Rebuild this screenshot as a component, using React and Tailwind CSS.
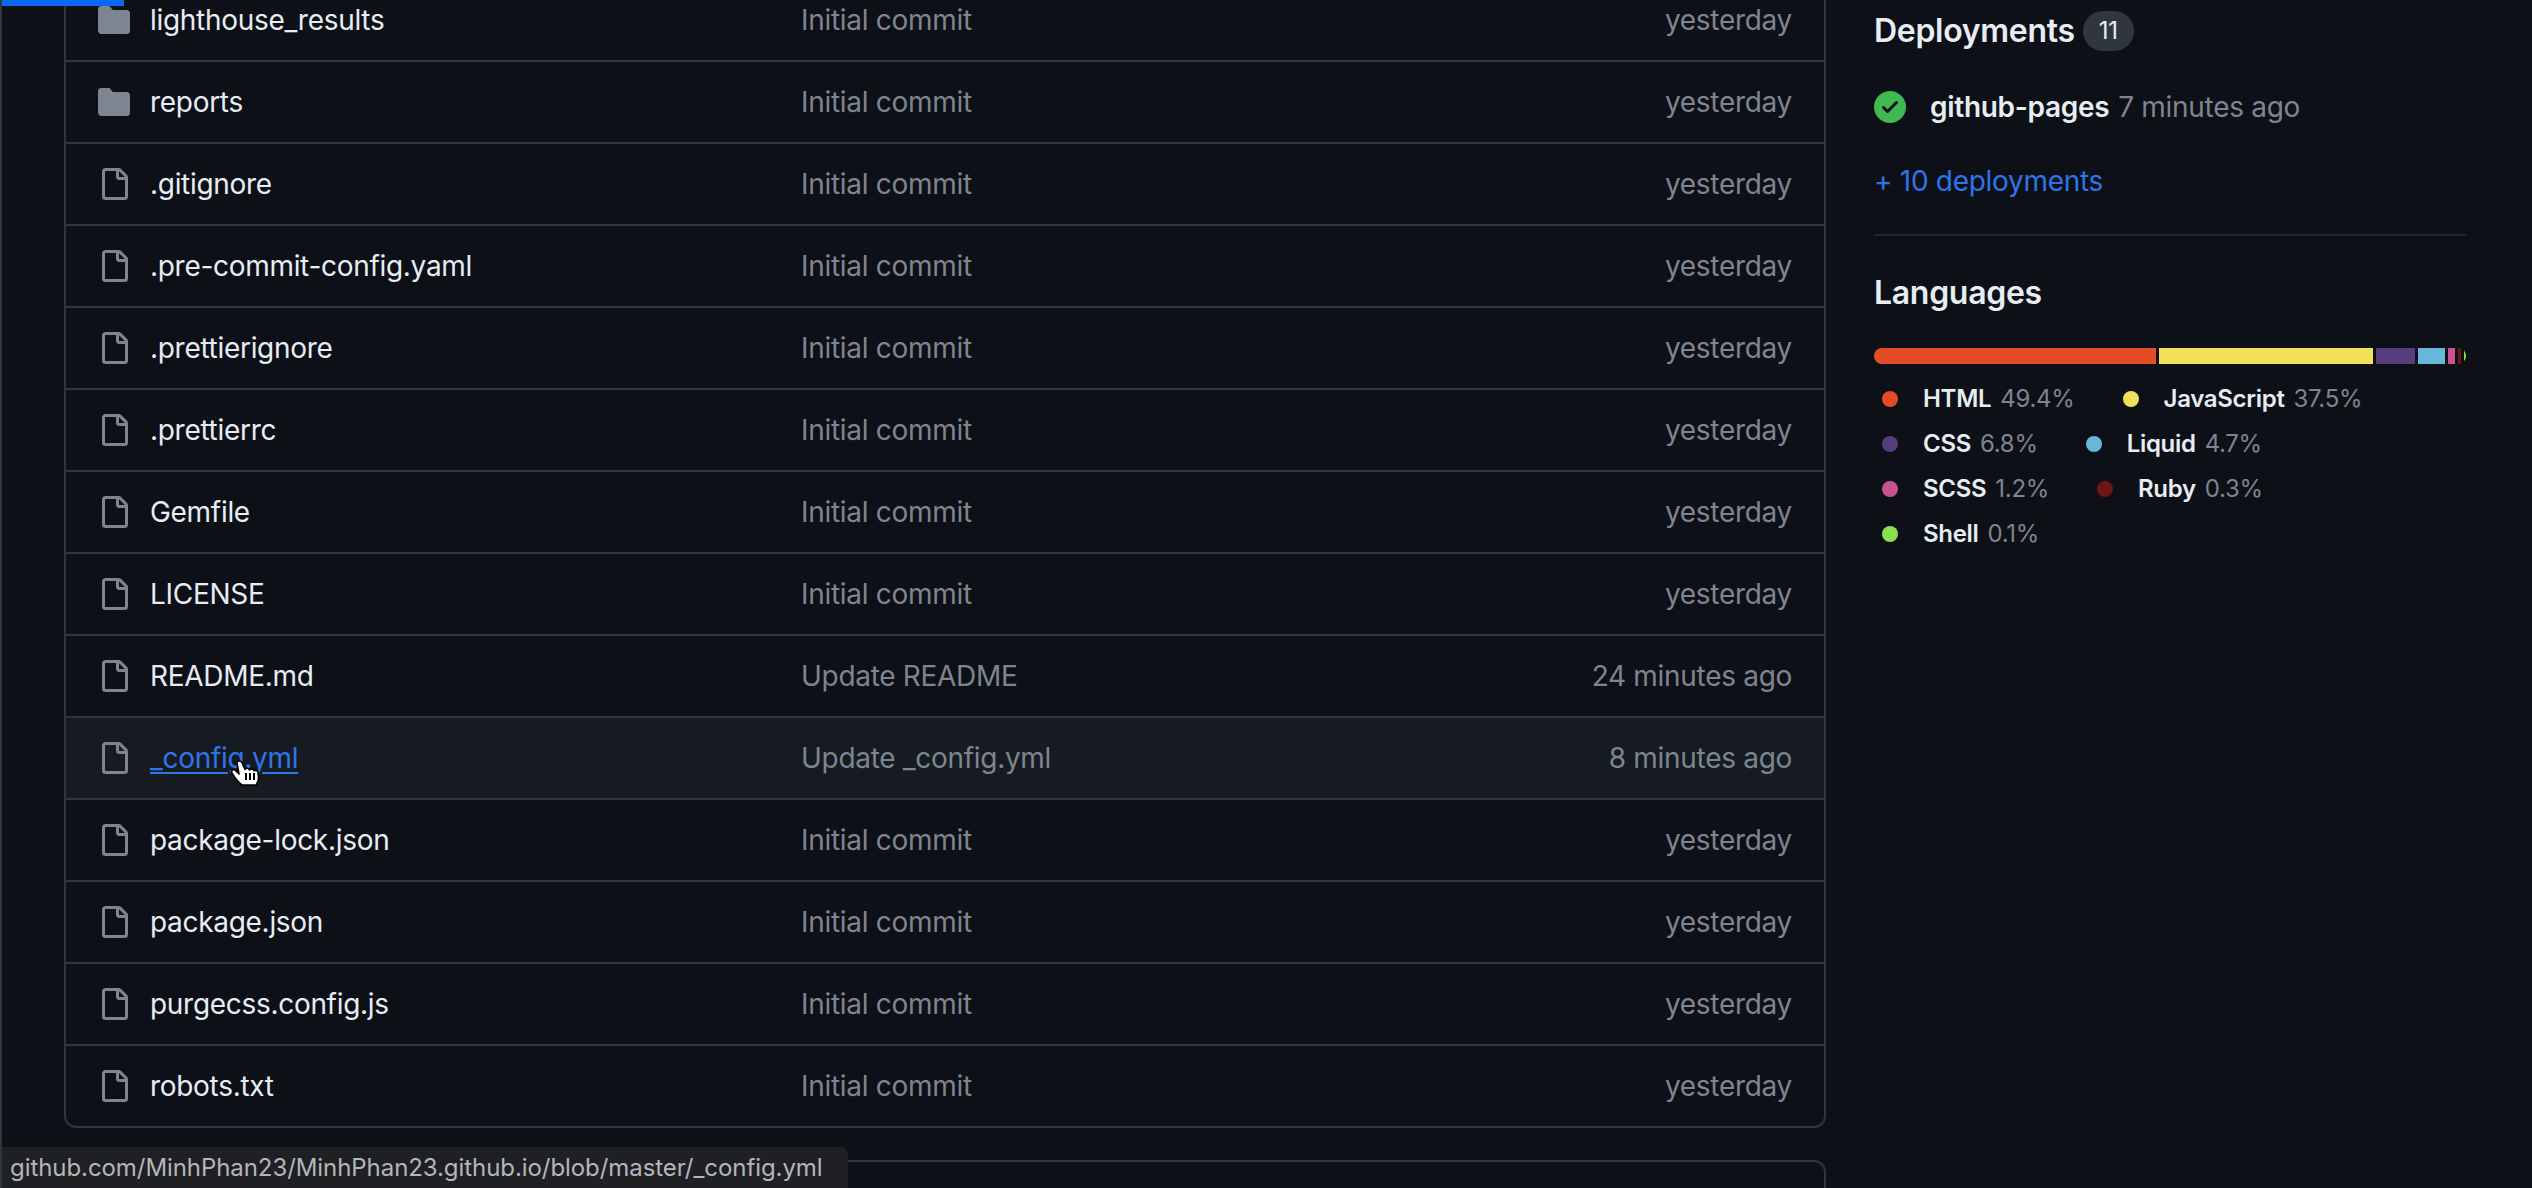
const FILES = [
  { name: 'lighthouse_results', dir: true, msg: 'Initial commit', time: 'yesterday' },
  { name: 'reports', dir: true, msg: 'Initial commit', time: 'yesterday' },
  { name: '.gitignore', msg: 'Initial commit', time: 'yesterday' },
  { name: '.pre-commit-config.yaml', msg: 'Initial commit', time: 'yesterday' },
  { name: '.prettierignore', msg: 'Initial commit', time: 'yesterday' },
  { name: '.prettierrc', msg: 'Initial commit', time: 'yesterday' },
  { name: 'Gemfile', msg: 'Initial commit', time: 'yesterday' },
  { name: 'LICENSE', msg: 'Initial commit', time: 'yesterday' },
  { name: 'README.md', msg: 'Update README', time: '24 minutes ago' },
  { name: '_config.yml', msg: 'Update _config.yml', time: '8 minutes ago', hover: true },
  { name: 'package-lock.json', msg: 'Initial commit', time: 'yesterday' },
  { name: 'package.json', msg: 'Initial commit', time: 'yesterday' },
  { name: 'purgecss.config.js', msg: 'Initial commit', time: 'yesterday' },
  { name: 'robots.txt', msg: 'Initial commit', time: 'yesterday' },
];

const LANG_ROWS = [
  [
    { name: 'HTML', pct: '49.4%', dot: 'bg-[#e34c26]' },
    { name: 'JavaScript', pct: '37.5%', dot: 'bg-[#f1e05a]' },
  ],
  [
    { name: 'CSS', pct: '6.8%', dot: 'bg-[#563d7c]' },
    { name: 'Liquid', pct: '4.7%', dot: 'bg-[#67b7dc]' },
  ],
  [
    { name: 'SCSS', pct: '1.2%', dot: 'bg-[#c6538c]' },
    { name: 'Ruby', pct: '0.3%', dot: 'bg-[#701516]' },
  ],
  [{ name: 'Shell', pct: '0.1%', dot: 'bg-[#89e051]' }],
];

function FileIcon() {
  return (
    <svg width="32" height="32" viewBox="0 0 16 16" fill="#7d8590" className="shrink-0">
      <path d="M2 1.75C2 .784 2.784 0 3.75 0h6.586c.464 0 .909.184 1.237.513l2.914 2.914c.329.328.513.773.513 1.237v9.586A1.75 1.75 0 0 1 13.25 16h-9.5A1.75 1.75 0 0 1 2 14.25Zm1.75-.25a.25.25 0 0 0-.25.25v12.5c0 .138.112.25.25.25h9.5a.25.25 0 0 0 .25-.25V6h-2.75A1.75 1.75 0 0 1 9 4.25V1.5Zm6.75.062V4.25c0 .138.112.25.25.25h2.688l-.011-.013-2.914-2.914-.013-.011Z" />
    </svg>
  );
}

function FolderIcon() {
  return (
    <svg width="32" height="32" viewBox="0 0 16 16" fill="#7d8590" className="shrink-0">
      <path d="M1.75 1A1.75 1.75 0 0 0 0 2.75v10.5C0 14.216.784 15 1.75 15h12.5A1.75 1.75 0 0 0 16 13.25v-8.5A1.75 1.75 0 0 0 14.25 3H7.5a.25.25 0 0 1-.2-.1l-.9-1.2C6.07 1.26 5.55 1 5 1H1.75Z" />
    </svg>
  );
}

function HandCursor() {
  return (
    <svg
      width="32"
      height="30"
      viewBox="0 0 32 30"
      className="absolute left-[228px] top-[758px]"
    >
      <path
        d="M7 5c0-2.500 4-2.800 5-.5l3 7c1-2 4-1.500 4.500.5 1-1.800 4-1.200 4.500.8 1.500-1 3.800-.3 4 1.700l.5 5c.2 3-1 5.500-2.500 7.500H12c-3-2-7-7-10-12-1.500-2.500 1.500-4.500 3.500-2.500l3.500 3.500Z"
        fill="#fff"
        stroke="#000"
        strokeWidth="1.600"
        strokeLinejoin="round"
      />
      <path d="M16 15v7M20 15v7M24 15v7" stroke="#000" strokeWidth="2" />
    </svg>
  );
}

function FileRow({ file }) {
  return (
    <div
      className={
        'flex items-center h-[82px] last:h-[80px] pl-[32px] pr-[32px] border-b-2 border-[#30363d] last:border-b-0 ' +
        (file.hover ? 'bg-[#161b22]' : '')
      }
    >
      <div className="w-[52px] shrink-0">{file.dir ? <FolderIcon /> : <FileIcon />}</div>
      <div
        className={
          'w-[651px] shrink-0 ' + (file.hover ? 'text-[#2f74e8] underline underline-offset-4' : 'text-[#e6edf3]')
        }
      >
        {file.name}
      </div>
      <div className="flex-1 text-[#7d8590]">{file.msg}</div>
      <div className="text-[#7d8590] text-right">{file.time}</div>
    </div>
  );
}

function LangBar() {
  return (
    <div className="flex gap-[3px] h-[16px] w-[592px] rounded-full overflow-hidden mt-[35px]">
      <div className="w-[282px] bg-[#e34c26]" />
      <div className="w-[214px] bg-[#f1e05a]" />
      <div className="w-[39px] bg-[#563d7c]" />
      <div className="w-[27px] bg-[#67b7dc]" />
      <div className="w-[7px] bg-[#c6538c]" />
      <div className="w-[3px] bg-[#701516]" />
      <div className="w-[2px] bg-[#89e051]" />
    </div>
  );
}

export default function App() {
  return (
    <div className="relative h-[1188px] overflow-hidden bg-[#0d1017] border-l-2 border-[#30363d] flex text-[28px] tracking-[-0.3px] font-['Inter',sans-serif]">
      <div className="absolute left-[-2px] top-0 h-[6px] w-[124px] bg-[#0969f5]" />

      {/* File table */}
      <main className="ml-[62px] w-[1762px] shrink-0">
        <div className="-mt-[20px] border-x-2 border-b-2 border-[#30363d] rounded-b-[12px] overflow-hidden">
          {FILES.map((f) => (
            <FileRow key={f.name} file={f} />
          ))}
        </div>
        <div className="mt-[32px] h-[60px] border-x-2 border-t-2 border-[#30363d] rounded-t-[12px]" />
      </main>

      {/* Sidebar */}
      <aside className="ml-[48px] w-[592px] shrink-0">
        <div className="flex items-center h-[40px] mt-[11px] gap-[8px]">
          <h2 className="text-[32px] font-semibold text-[#e6edf3]">Deployments</h2>
          <span className="flex items-center justify-center w-[51px] h-[40px] rounded-full bg-[#30363d] text-[24px] text-[#e6edf3]">
            11
          </span>
        </div>
        <div className="flex items-center mt-[39px] h-[34px]">
          <svg width="32" height="32" viewBox="0 0 16 16" fill="#3fb950" className="shrink-0">
            <path d="M8 16A8 8 0 1 1 8 0a8 8 0 0 1 0 16Zm3.780-9.720a.751.751 0 0 0-.018-1.042.751.751 0 0 0-1.042-.018L6.750 9.190 5.280 7.720a.751.751 0 0 0-1.042.018.751.751 0 0 0-.018 1.042l2 2a.750.750 0 0 0 1.060 0Z" />
          </svg>
          <span className="ml-[24px] font-semibold text-[#e6edf3]">github-pages</span>
          <span className="ml-[9px] text-[#7d8590]">7 minutes ago</span>
        </div>
        <div className="mt-[40px] text-[#2f74e8] leading-[34px]">+ 10 deployments</div>
        <div className="mt-[36px] border-t-2 border-[#21262d]" />
        <h2 className="mt-[37px] text-[32px] font-semibold text-[#e6edf3] leading-[40px]">Languages</h2>
        <LangBar />
        <div className="mt-[12px] flex flex-col">
          {LANG_ROWS.map((row) => (
            <div key={row[0].name} className="flex items-center h-[45px] text-[24px] pl-[8px] gap-[48px]">
              {row.map((l) => (
                <div key={l.name} className="flex items-center">
                  <span className={'w-[16px] h-[16px] rounded-full ' + l.dot} />
                  <span className="ml-[25px] font-semibold text-[#e6edf3]">{l.name}</span>
                  <span className="ml-[9px] text-[#7d8590]">{l.pct}</span>
                </div>
              ))}
            </div>
          ))}
        </div>
      </aside>

      <HandCursor />

      {/* Link preview in the browser's status bar */}
      <div className="absolute left-[-2px] bottom-0 h-[41px] w-[848px] bg-[#1e2024] rounded-tr-[8px] pl-[10px] flex items-center text-[24px] tracking-[-0.07px] text-[#b4b6ba]">
        github.com/MinhPhan23/MinhPhan23.github.io/blob/master/_config.yml
      </div>
    </div>
  );
}
